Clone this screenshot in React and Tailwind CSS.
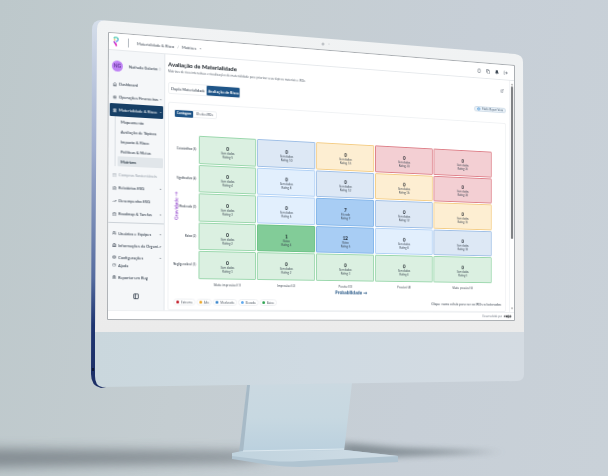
import React from 'react';
import {
  House, CircleDollarSign, Landmark, ShoppingBag, FileText, TrendingUp, CalendarCheck, Users, Building2,
  Settings, CircleHelp, Bug, ChevronDown, ChevronUp, ChevronsUpDown, PanelLeft, Globe, Copy, Bell, LogOut,
  ExternalLink, Eye,
} from 'lucide-react';

// Size of the flat screen before it is turned in space.
const SCREEN_W = 454;
const SCREEN_H = 286;

// Projects the flat screen onto the four corners of the monitor's glass.
function project(w, h, [p0, p1, p2, p3]) {
  const dx1 = p1[0] - p2[0];
  const dx2 = p3[0] - p2[0];
  const dy1 = p1[1] - p2[1];
  const dy2 = p3[1] - p2[1];
  const sx = p0[0] - p1[0] + p2[0] - p3[0];
  const sy = p0[1] - p1[1] + p2[1] - p3[1];
  const det = dx1 * dy2 - dx2 * dy1;
  const g = (sx * dy2 - dx2 * sy) / det;
  const k = (dx1 * sy - sx * dy1) / det;
  const a = p1[0] - p0[0] + g * p1[0];
  const b = p3[0] - p0[0] + k * p3[0];
  const d = p1[1] - p0[1] + g * p1[1];
  const e = p3[1] - p0[1] + k * p3[1];
  return `matrix3d(${[a / w, d / w, 0, g / w, b / h, e / h, 0, k / h, 0, 0, 1, 0, p0[0], p0[1], 0, 1].join(',')})`;
}

const glass = project(SCREEN_W, SCREEN_H, [[109, 33], [514, 66], [514, 320], [108, 319]]);

const tones = {
  green: 'bg-[#dbf0e1] border-[#9ad7ac]',
  greenFull: 'bg-[#82cc98] border-[#6dc387]',
  sky: 'bg-[#e2effd] border-[#b1d1f5]',
  steel: 'bg-[#dde8f5] border-[#9fbfe6]',
  blueFull: 'bg-[#a8cdf4] border-[#82b5e9]',
  amber: 'bg-[#fdeed2] border-[#f4cd86]',
  red: 'bg-[#f3cfd3] border-[#de818a]',
};

const rows = [
  { label: 'Catastrófico (5)', level: 5, cells: ['green', 'steel', 'amber', 'red', 'red'] },
  { label: 'Significativo (4)', level: 4, cells: ['green', 'sky', 'steel', 'amber', 'red'] },
  { label: 'Moderado (3)', level: 3, cells: ['green', 'sky', 'blueFull', 'steel', 'amber'] },
  { label: 'Baixo (2)', level: 2, cells: ['green', 'greenFull', 'blueFull', 'sky', 'steel'] },
  { label: 'Negligenciável (1)', level: 1, cells: ['green', 'green', 'green', 'green', 'green'] },
];

const filled = { '3-3': [7, 'Elevado'], '2-2': [1, 'Baixo'], '2-3': [12, 'Baixo'] };

const columns = ['Muito improvável (1)', 'Improvável (2)', 'Possível (3)', 'Provável (4)', 'Muito provável (5)'];

const legend = [
  ['Extremo', 'bg-[#c01522]'],
  ['Alto', 'bg-[#eba21c]'],
  ['Moderado', 'bg-[#2f7fc9]'],
  ['Elevado', 'bg-[#5ba7ee]'],
  ['Baixo', 'bg-[#27a04b]'],
];

function NavItem({ icon: Icon, label, chevron, muted, height = 'h-[13px]' }) {
  return (
    <button className={`flex w-full items-center gap-[2px] pr-[2px] pl-1 text-left ${height} ${muted ? 'text-[#9aa3ad]' : 'text-[#2a3644]'}`}>
      <Icon className="size-[4px] shrink-0" strokeWidth={2} />
      <span className="min-w-0 flex-1 whitespace-nowrap">{label}</span>
      {chevron && <ChevronDown className="size-[3px] shrink-0" strokeWidth={2} />}
    </button>
  );
}

function Sidebar() {
  const sub = ['Mapeamento', 'Avaliação de Tópicos', 'Impacto & Risco', 'Políticas & Metas'];
  return (
    <aside className="flex w-[57px] shrink-0 flex-col border-r border-[#e3e7eb] bg-[#f5f7f9] font-['Lato','Open_Sans',sans-serif] text-[4px] leading-[5px] font-medium">
      <div className="flex h-[27px] items-center gap-[6px] px-[3px] pt-[3px]">
        <span className="flex size-[11px] shrink-0 items-center justify-center rounded-full bg-[#bf83f5] text-[5px] text-[#4b2480]">NG</span>
        <span className="min-w-0 flex-1 whitespace-nowrap text-[#2a3644]">Nathalia Galarim</span>
        <ChevronsUpDown className="size-[3px] shrink-0 text-[#6b7683]" strokeWidth={2} />
      </div>
      <nav className="flex flex-col">
        <NavItem icon={House} label="Dashboard" />
        <NavItem icon={CircleDollarSign} label="Operações Financeiras" chevron />
        <button className="mx-px flex h-[13px] items-center gap-[2px] rounded-[1px] bg-[#163f66] pr-px pl-[3px] text-left text-white">
          <Landmark className="size-[4px] shrink-0" strokeWidth={3} />
          <span className="min-w-0 flex-1 whitespace-nowrap">Materialidade &amp; Risco</span>
          <ChevronUp className="size-[3px] shrink-0" strokeWidth={2} />
        </button>
        <div className="mr-px mb-[2px] ml-[6px] flex flex-col border-l border-[#d9dee3] pl-[2px]">
          {sub.map((s) => (
            <a key={s} href="#" className="flex h-[10px] items-center px-[3px] text-[#2a3644]">{s}</a>
          ))}
          <a href="#" className="flex h-[10px] items-center rounded-[1px] bg-[#e1e6ea] px-[3px] font-bold text-[#22303d]">Matrizes</a>
        </div>
        <NavItem icon={ShoppingBag} label="Compras Sustentáveis" muted />
        <NavItem icon={FileText} label="Relatórios ESG" chevron />
        <NavItem icon={TrendingUp} label="Desempenho ESG" />
        <NavItem icon={CalendarCheck} label="Roadmap & Tarefas" chevron />
        <hr className="mt-[2px] mb-1 border-[#ccd2d8]" />
        <NavItem icon={Users} label="Usuários e Equipes" chevron height="h-3" />
        <NavItem icon={Building2} label="Informações da Organi..." chevron height="h-3" />
        <NavItem icon={Settings} label="Configurações" chevron height="h-3" />
        <NavItem icon={CircleHelp} label="Ajuda" height="h-1" />
        <NavItem icon={Bug} label="Reportar um Bug" height="h-5" />
      </nav>
      <button aria-label="Recolher menu" className="mt-[6px] flex justify-center text-[#2a3644]">
        <PanelLeft className="size-[6px]" strokeWidth={3} />
      </button>
    </aside>
  );
}

function Header() {
  return (
    <header className="flex h-[17px] shrink-0 items-center border-b border-[#e6e9ec] bg-white pr-2 pl-[4px] text-[4px] leading-[5px] text-[#3a4450]">
      <svg viewBox="0 0 10 18" className="h-[10px] w-[6px]" fill="none">
        <path d="M1 3.5C3 .5 9 1 9 5" stroke="#48c9b0" strokeWidth="2.6" />
        <path d="M9 4.500C9 8 6.500 8.500 4.500 9" stroke="#79aee8" strokeWidth="2.600" />
        <path d="M1 5.500L4 6.500" stroke="#f0c05a" strokeWidth="2.200" />
        <path d="M1 9L4 13" stroke="#b03fd8" strokeWidth="2.600" />
        <path d="M4 12L6 17" stroke="#e22cc0" strokeWidth="3" />
      </svg>
      <span className="mr-[8px] ml-[9px] h-[9px] w-px bg-[#b4bac1]" />
      <nav className="flex items-center gap-[3px] font-['Lato','Open_Sans',sans-serif]">
        <a href="#">Materialidade &amp; Risco</a>
        <span className="text-[#9aa3ad]">/</span>
        <a href="#">Matrizes</a>
        <ChevronDown className="size-[3px]" strokeWidth={2} />
      </nav>
      <div className="ml-auto flex items-center gap-[6px] text-[#2a3644]">
        <button aria-label="Idioma"><Globe className="size-[5px]" strokeWidth={1} /></button>
        <button aria-label="Copiar"><Copy className="size-[5px]" strokeWidth={2} /></button>
        <button aria-label="Notificações"><Bell className="size-[5px]" fill="currentColor" strokeWidth={2} /></button>
        <button aria-label="Sair"><LogOut className="size-[5px]" strokeWidth={2} /></button>
      </div>
    </header>
  );
}

function Matrix() {
  return (
    <div className="relative mt-[18px] mr-[12px] flex">
      <div className="grid h-[147px] w-[26px] shrink-0 grid-rows-5 pr-[7px] text-right font-['Lato','Open_Sans',sans-serif] text-[3px] font-medium text-[#333d48]">
        {rows.map((r) => (
          <span key={r.label} className="flex items-center justify-end whitespace-nowrap">{r.label}</span>
        ))}
      </div>
      <span className="absolute top-[70px] left-[-13px] w-[32px] -rotate-90 text-center font-['Lato','Open_Sans',sans-serif] text-[5px] leading-[5px] font-bold whitespace-nowrap text-[#9a52d0]">Gravidade →</span>
      <div className="min-w-0 flex-1">
        <div className="grid h-[147px] grid-cols-[62fr_65fr_67fr_69fr_72fr] grid-rows-5 gap-px">
          {rows.map((r) =>
            r.cells.map((tone, i) => {
              const [count, name] = filled[`${r.level}-${i + 1}`] || [0, 'Sem dados'];
              return (
                <button key={`${r.level}-${i}`} className={`flex flex-col items-center justify-center rounded-[1px] border pt-[3px] font-['Lato','Open_Sans',sans-serif] text-[3px] leading-[4px] text-[#3c4652] ${tones[tone]}`}>
                  <span className="text-[5px] leading-[6px] font-bold text-[#10161d]">{count}</span>
                  <span>{name}</span>
                  <span>Rating {r.level * (i + 1)}</span>
                </button>
              );
            })
          )}
        </div>
        <div className="mt-1 grid grid-cols-[62fr_65fr_67fr_69fr_72fr] gap-px text-center text-[3px] leading-[4px] font-medium text-[#26313d]">
          {columns.map((c) => <span key={c}>{c}</span>)}
        </div>
        <div className="mt-px text-center font-['Lato','Open_Sans',sans-serif] text-[5px] leading-[6px] font-bold text-[#1c4f80]">Probabilidade →</div>
      </div>
    </div>
  );
}

function Content() {
  return (
    <main className="flex min-w-0 flex-1 flex-col bg-white pr-[4px] pl-[3px]">
      <div className="flex justify-between pt-[6px]">
        <div>
          <h1 className="font-['Lato','Open_Sans',sans-serif] text-[6px] leading-[8px] font-bold text-[#11181f]">Avaliação de Materialidade</h1>
          <p className="mt-px text-[3px] leading-[4px] text-[#4a5460]">Matrizes de risco interativas e visualizações de materialidade para priorizar seus tópicos materiais e IROs</p>
        </div>
        <button aria-label="Abrir em nova janela" className="mt-[4px] mr-[3px] self-start text-[#4a5562]"><ExternalLink className="size-[4px]" strokeWidth={2} /></button>
      </div>
      <div className="mt-[9px] flex items-center justify-between">
        <div className="flex items-center rounded-[2px] border border-[#eff1f3] font-['Lato','Open_Sans',sans-serif] text-[4px] leading-[5px]">
          <button className="px-[2px] text-[#2a3644]">Dupla Materialidade</button>
          <button className="h-[10px] rounded-[1px] bg-[#1f5588] px-px font-bold text-white">Avaliação de Risco</button>
        </div>
        <button className="flex h-[6px] items-center gap-[2px] rounded-full border border-[#d3dfea] bg-[#e8f0f7] px-[3px] text-[3px] leading-[4px] text-[#3a5068]">
          <Eye className="size-[4px] text-[#3b8fd6]" strokeWidth={3} />
          Public Report View
        </button>
      </div>
      <section className="mt-[8px] flex flex-1 flex-col rounded-[2px] border border-[#f0f2f4] px-[5px] pt-[6px]">
        <div className="flex h-[8px] items-center self-start rounded-[2px] border border-[#eff1f3] text-[3px] leading-[4px]">
          <button className="h-[7px] rounded-[1px] bg-[#1f5588] px-[2px] font-bold text-white">Contagem</button>
          <button className="px-[3px] text-[#2a3644]">IDs dos IROs</button>
        </div>
        <Matrix />
        <div className="mt-[5px] flex items-center justify-between text-[3px] leading-[4px] text-[#3c4652]">
          <ul className="flex gap-px">
            {legend.map(([name, color]) => (
              <li key={name} className="flex h-[7px] items-center gap-[2px] rounded-full border border-[#eff1f3] px-[2px]">
                <span className={`size-[3px] rounded-full ${color}`} />
                {name}
              </li>
            ))}
          </ul>
          <span className="font-['Lato','Open_Sans',sans-serif] text-[4px] leading-[5px]">Clique numa célula para ver os IROs relacionados</span>
        </div>
      </section>
    </main>
  );
}

function Screen() {
  return (
    <div
      className="absolute top-0 left-0 flex h-[286px] w-[454px] origin-top-left flex-col overflow-hidden bg-white font-['Open_Sans',sans-serif]"
      style={{ transform: glass }}
    >
      <Header />
      <div className="flex h-[260px]">
        <Sidebar />
        <Content />
        <div className="flex w-[6px] flex-col items-center border-l border-[#f0f2f4] bg-white py-[2px]">
          <span className="text-[3px] leading-[4px] text-[#333]">▲</span>
          <span className="h-[172px] w-[3px] rounded-full bg-[#808285]" />
          <span className="mt-auto text-[3px] leading-[4px] text-[#333]">▼</span>
        </div>
      </div>
      <footer className="flex h-[9px] items-center justify-end gap-[2px] border-t border-[#eef0f2] bg-white pr-[3px] text-[3px] leading-[4px] text-[#5a6470]">
        Desenvolvido por
        <svg viewBox="0 0 26 10" className="h-[4px] w-[10px]" fill="none" stroke="#15191e" strokeWidth="2">
          <path d="M1 5h4M5 2v5M8 2l4 6M12 2L8 8" />
          <circle cx="16" cy="5" r="3" />
          <path d="M21 2l3 3-3 3" />
        </svg>
      </footer>
    </div>
  );
}

function Monitor() {
  return (
    <svg viewBox="0 0 608 476" className="absolute inset-0 h-full w-full overflow-visible" aria-hidden="true">
      <defs>
        <linearGradient id="side" x1="0" y1="20" x2="0" y2="388" gradientUnits="userSpaceOnUse">
          <stop offset="0" stopColor="#d5deea" />
          <stop offset=".35" stopColor="#a0aed0" />
          <stop offset=".7" stopColor="#566c9f" />
          <stop offset=".83" stopColor="#1d3470" />
          <stop offset="1" stopColor="#1d2f66" />
        </linearGradient>
        <linearGradient id="bezel" x1="0" y1="0" x2="0" y2="1">
          <stop offset="0" stopColor="#f1f3f4" />
          <stop offset="1" stopColor="#ebebeb" />
        </linearGradient>
        <linearGradient id="chin" x1="0" y1="0" x2="1" y2="0">
          <stop offset="0" stopColor="#cad7dd" />
          <stop offset=".5" stopColor="#cfdae2" />
          <stop offset="1" stopColor="#d4dbe2" />
        </linearGradient>
        <linearGradient id="stand" x1="0" y1="0" x2="0" y2="1">
          <stop offset="0" stopColor="#cbd9e1" />
          <stop offset=".5" stopColor="#c7d8e1" />
          <stop offset="1" stopColor="#bad0de" />
        </linearGradient>
        <linearGradient id="base" x1="0" y1="0" x2="1" y2="0">
          <stop offset="0" stopColor="#c0d3de" />
          <stop offset="1" stopColor="#d0dde6" />
        </linearGradient>
        <filter id="soft" x="-20%" y="-150%" width="140%" height="400%">
          <feGaussianBlur stdDeviation="14 6" />
        </filter>
        <filter id="tight" x="-20%" y="-150%" width="140%" height="400%">
          <feGaussianBlur stdDeviation="8 3" />
        </filter>
      </defs>
      <path d="M-60 448L260 452L260 462L-60 469Z" fill="#747d83" opacity=".8" filter="url(#soft)" />
      <path d="M338 442L400 448L498 452L390 457L338 456Z" fill="#7d878e" opacity=".9" filter="url(#tight)" />
      <path d="M247 384L352 383L344 452L241 453Z" fill="url(#stand)" />
      <path d="M247 385L250 385L243 453L239 453Z" fill="#a7bac7" />
      <path d="M232 454L240 452L345 450L398 456V462L300 467Q285 467 270 465L232 459Z" fill="#b0c4d1" />
      <path d="M232 453L242 451L345 450L398 456L300 461Q285 462 272 461L232 456Z" fill="url(#base)" />
      <path d="M243 451L344 449" stroke="#dce8ef" />
      <path d="M92 30Q92 20 101 20L110 22L106 387L101 388Q91 386 91 374Z" fill="url(#side)" />
      <path d="M95 332H524V374Q524 381 517 381L102 387Q95 386 95 376Z" fill="url(#chin)" />
      <path d="M97 29Q97 20 105 20.500L515 54Q523 55 523 62L524 332H95Z" fill="url(#bezel)" />
      <path d="M92 368h2v3h-2z" fill="#0c1636" />
      <circle cx="323" cy="44" r="1.500" fill="#bfc3c7" />
      <circle cx="329" cy="44" r=".600" fill="#c4c8cb" />
      <path d="M108.500 32.500L514.500 65.500L514.500 320.500L107.500 319.500Z" fill="#fff" stroke="#aaaeb2" />
    </svg>
  );
}

export default function App() {
  return (
    <div className="flex min-h-screen items-center justify-center overflow-hidden bg-[#c5ced4] bg-[linear-gradient(100deg,#bdc8cb_0%,#c4cdd1_35%,#c7cfd7_70%,#c9d1d8_100%)]">
      <div className="relative h-[476px] w-[608px] shrink-0">
        <Monitor />
        <Screen />
      </div>
    </div>
  );
}
